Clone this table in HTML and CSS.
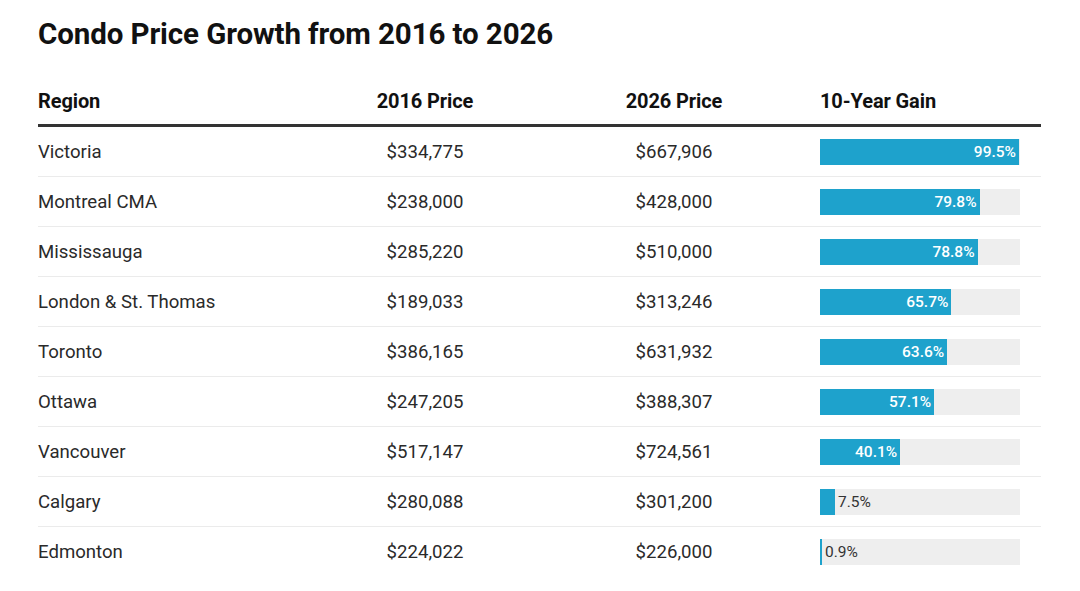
FILE: index.html
```html
<!DOCTYPE html>
<html lang="en">
<head>
<meta charset="utf-8">
<title>Condo Price Growth</title>
<link rel="stylesheet" href="styles.css">
</head>
<body>
<div class="wrap">
  <h1 class="title">Condo Price Growth from 2016 to 2026</h1>
  <div class="table">
    <div class="row head">
      <div class="c c1">Region</div>
      <div class="c c2">2016 Price</div>
      <div class="c c3">2026 Price</div>
      <div class="c c4">10-Year Gain</div>
    </div>
    <div class="row">
      <div class="c c1">Victoria</div><div class="c c2">$334,775</div><div class="c c3">$667,906</div>
      <div class="c c4"><div class="track"><div class="fill" style="width:99.5%"><span class="in">99.5%</span></div></div></div>
    </div>
    <div class="row">
      <div class="c c1">Montreal CMA</div><div class="c c2">$238,000</div><div class="c c3">$428,000</div>
      <div class="c c4"><div class="track"><div class="fill" style="width:79.8%"><span class="in">79.8%</span></div></div></div>
    </div>
    <div class="row">
      <div class="c c1">Mississauga</div><div class="c c2">$285,220</div><div class="c c3">$510,000</div>
      <div class="c c4"><div class="track"><div class="fill" style="width:78.8%"><span class="in">78.8%</span></div></div></div>
    </div>
    <div class="row">
      <div class="c c1">London &amp; St. Thomas</div><div class="c c2">$189,033</div><div class="c c3">$313,246</div>
      <div class="c c4"><div class="track"><div class="fill" style="width:65.7%"><span class="in">65.7%</span></div></div></div>
    </div>
    <div class="row">
      <div class="c c1">Toronto</div><div class="c c2">$386,165</div><div class="c c3">$631,932</div>
      <div class="c c4"><div class="track"><div class="fill" style="width:63.6%"><span class="in">63.6%</span></div></div></div>
    </div>
    <div class="row">
      <div class="c c1">Ottawa</div><div class="c c2">$247,205</div><div class="c c3">$388,307</div>
      <div class="c c4"><div class="track"><div class="fill" style="width:57.1%"><span class="in">57.1%</span></div></div></div>
    </div>
    <div class="row">
      <div class="c c1">Vancouver</div><div class="c c2">$517,147</div><div class="c c3">$724,561</div>
      <div class="c c4"><div class="track"><div class="fill" style="width:40.1%"><span class="in">40.1%</span></div></div></div>
    </div>
    <div class="row">
      <div class="c c1">Calgary</div><div class="c c2">$280,088</div><div class="c c3">$301,200</div>
      <div class="c c4"><div class="track"><div class="fill" style="width:7.5%"></div><span class="out">7.5%</span></div></div>
    </div>
    <div class="row last">
      <div class="c c1">Edmonton</div><div class="c c2">$224,022</div><div class="c c3">$226,000</div>
      <div class="c c4"><div class="track"><div class="fill" style="width:0.9%"></div><span class="out">0.9%</span></div></div>
    </div>
  </div>
</div>
</body>
</html>
```

FILE: styles.css
```css
html, body {
  margin: 0;
  padding: 0;
  background: #ffffff;
}
body {
  font-family: Roboto, "Liberation Sans", Arial, sans-serif;
  color: #222222;
}
.wrap {
  padding: 14px 39px 0 38px;
}
.title {
  margin: 0;
  font-size: 29.5px;
  line-height: 40px;
  font-weight: 700;
  color: #111111;
  letter-spacing: -0.1px;
}
.table {
  margin-top: 31px;
}
.row {
  display: grid;
  grid-template-columns: 262px 250px 248px 1fr;
  align-items: center;
  height: 49px;
  border-bottom: 1px solid #ebebeb;
}
.row.last {
  border-bottom: none;
}
.row.head {
  height: 35px;
  padding-top: 4px;
  border-bottom: 3px solid #333333;
  align-items: start;
}
.c {
  font-size: 18.6px;
  line-height: 24px;
  color: #2a2a2a;
}
.head .c {
  font-weight: 700;
  font-size: 20px;
  color: #111111;
  letter-spacing: -0.1px;
}
.c2, .c3 {
  text-align: center;
}
.c4 {
  padding-left: 22px;
}
.track {
  position: relative;
  display: flex;
  align-items: center;
  width: 200px;
  height: 26px;
  background: #eeeeee;
}
.fill {
  height: 100%;
  min-width: 2px;
  background: #1ea2cc;
  display: flex;
  align-items: center;
  justify-content: flex-end;
}
.in {
  color: #ffffff;
  font-weight: 500;
  font-size: 15.5px;
  padding-right: 3px;
}
.out {
  color: #333333;
  font-size: 15.5px;
  padding-left: 3px;
}
```
